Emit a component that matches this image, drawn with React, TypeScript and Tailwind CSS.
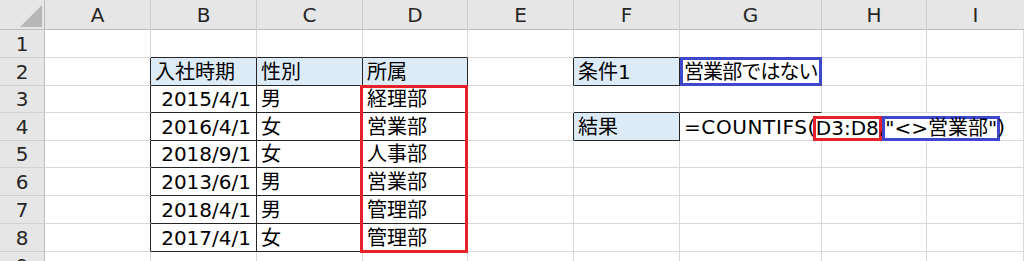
import React from 'react';

type Cell = { text?: React.ReactNode; right?: boolean };

const COL_LETTERS = ['A', 'B', 'C', 'D', 'E', 'F', 'G', 'H', 'I'];

const formula = (
  <span className="whitespace-nowrap">
    <span className="tracking-[0.6px]">=COUNTIFS(</span>
    <span className="inline-block h-[19px] leading-[19px] align-middle ring-3 ring-[#e8202a]">D3:D8</span>
    ,
    <span className="inline-block h-[19px] leading-[19px] align-middle ring-3 ring-[#3f48cc]">"&lt;&gt;営業部"</span>
    )
  </span>
);

// rows 1..9, columns A..I
const DATA: Record<number, Record<number, Cell>> = {
  2: { 1: { text: '入社時期' }, 2: { text: '性別' }, 3: { text: '所属' }, 5: { text: '条件1' }, 6: { text: '営業部ではない' } },
  3: { 1: { text: '2015/4/1', right: true }, 2: { text: '男' }, 3: { text: '経理部' } },
  4: { 1: { text: '2016/4/1', right: true }, 2: { text: '女' }, 3: { text: '営業部' }, 5: { text: '結果' }, 6: { text: formula } },
  5: { 1: { text: '2018/9/1', right: true }, 2: { text: '女' }, 3: { text: '人事部' } },
  6: { 1: { text: '2013/6/1', right: true }, 2: { text: '男' }, 3: { text: '営業部' } },
  7: { 1: { text: '2018/4/1', right: true }, 2: { text: '男' }, 3: { text: '管理部' } },
  8: { 1: { text: '2017/4/1', right: true }, 2: { text: '女' }, 3: { text: '管理部' } },
};

const bordered = (r: number, c: number) =>
  (r >= 2 && r <= 8 && c >= 1 && c <= 3) || (c === 5 && (r === 2 || r === 4));

const isBlue = (r: number, c: number) => (r === 2 && c >= 1 && c <= 3) || (c === 5 && (r === 2 || r === 4));

function cellClass(r: number, c: number) {
  const rightBlack = bordered(r, c) || bordered(r, c + 1);
  const bottomBlack = bordered(r, c) || bordered(r + 1, c) || (r === 3 && c === 6);
  const noRight = r === 4 && (c === 6 || c === 7);
  const rightCls = noRight ? '' : rightBlack ? 'border-r border-r-[#262626]' : 'border-r border-r-[#d9d9d9]';
  const bottomCls = bottomBlack ? 'border-b border-b-[#262626]' : 'border-b border-b-[#d9d9d9]';
  return `${rightCls} ${bottomCls}`;
}

export default function App() {
  const rows = [1, 2, 3, 4, 5, 6, 7, 8, 9];
  return (
    <div className="h-[261px] w-[1024px] overflow-hidden bg-white font-['DejaVu_Sans','Noto_Sans_CJK_JP',sans-serif] text-[20px] text-black">
      <div className="relative grid grid-cols-[45px_106px_106px_106px_105px_106px_106px_142px_105px_97px] grid-rows-[30px_28px_28px_27px_28px_27px_28px_28px_28px_28px]">
        {/* corner */}
        <div className="flex items-start justify-end border-b border-r border-[#bdbdbd] bg-[#e6e6e6] pr-[2px] pt-[5px]">
          <svg width="22" height="22" viewBox="0 0 22 22">
            <polygon points="0,22 22,22 22,0" fill="#b7b7b7" />
          </svg>
        </div>
        {COL_LETTERS.map((l, i) => (
          <div
            key={l}
            className={`flex items-center justify-center border-b border-b-[#bdbdbd] bg-[#e6e6e6] text-[#262626] ${i < 8 ? 'border-r border-r-[#cdcdcd]' : ''}`}
          >
            {l}
          </div>
        ))}

        {rows.map(r => (
          <React.Fragment key={r}>
            <div className="flex items-center justify-center border-b border-r border-b-[#d0d0d0] border-r-[#bdbdbd] bg-[#e6e6e6] text-[#262626]">
              {r}
            </div>
            {COL_LETTERS.map((_, c) => {
              const cell = DATA[r]?.[c];
              if (r === 2 && c === 6) {
                return (
                  <div key={c} className="-mt-px flex items-center whitespace-nowrap border-3 border-[#3f48cc] pl-px tracking-[-0.9px]">
                    {cell?.text}
                  </div>
                );
              }
              return (
                <div
                  key={c}
                  className={`flex items-center whitespace-nowrap ${cellClass(r, c)} ${isBlue(r, c) ? 'bg-[#ddebf7]' : ''} ${
                    cell?.right ? 'justify-end pr-[5px]' : 'pl-[4px]'
                  } ${r === 4 && c === 6 ? 'relative z-10 overflow-visible' : 'overflow-hidden'}`}
                >
                  {cell?.text}
                </div>
              );
            })}
          </React.Fragment>
        ))}

        {/* red highlight around D3:D8 */}
        <div className="pointer-events-none absolute left-[360px] top-[85px] z-20 h-[168px] w-[108px] border-3 border-[#e8202a]" />
      </div>
    </div>
  );
}
